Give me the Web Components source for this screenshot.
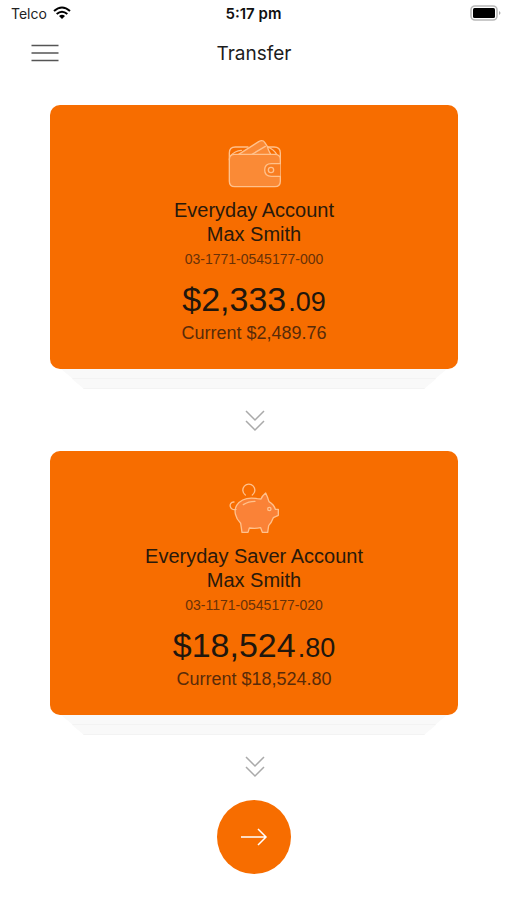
<!DOCTYPE html>
<html lang="en">
<head>
<meta charset="utf-8">
<meta name="viewport" content="width=device-width, initial-scale=1">
<title>Transfer</title>
<style>
body { margin: 0; background: #fff; color: #1c1c1c; font-family: "Liberation Sans", Arial, sans-serif; }
</style>
</head>
<body>
<transfer-screen></transfer-screen>

<template id="status-bar">
<style>
:host { display: grid; grid-template-columns: 1fr auto 1fr; align-items: center; height: 28px; padding: 0 5px; font: 14px/20px Inter, Roboto, sans-serif; color: #222; }
.left { display: flex; align-items: center; gap: 6px; padding-left: 6px; }
.left svg { margin-bottom: 2px; }
.time { font-weight: 600; font-size: 15px; color: #111; }
.right { display: flex; justify-content: flex-end; padding-bottom: 2px; }
svg { display: block; }
</style>
<div class="left"><span>Telco</span>
<svg width="18" height="14" viewBox="0 0 54 42" fill="none" stroke="#000" stroke-width="6" aria-label="Wi-Fi"><path d="M3 15Q27 -6 51 15M11 24Q27 10 43 24"/><path d="M18 30Q27 23 36 30L27 39Z" fill="#000" stroke="none"/></svg></div>
<span class="time">5:17 pm</span>
<div class="right"><svg width="32" height="16" viewBox="0 0 32 16" aria-label="Battery"><rect x="1" y="1" width="26" height="14" rx="4" fill="#fff" stroke="#b8b8b8" stroke-width="1.6"/><rect x="3" y="3" width="22" height="10" rx="1.5" fill="#000"/><path d="M29 6Q32 8 29 10Z" fill="#aaa"/></svg></div>
</template>

<template id="nav-bar">
<style>
:host { display: grid; grid-template-columns: 1fr auto 1fr; align-items: center; height: 50px; padding: 0 24px 0 25px; }
button { justify-self: start; padding: 6px; border: 0; background: none; cursor: pointer; }
svg { display: block; }
h1 { margin: 0; padding-top: 1px; font: 400 19px/24px Inter, Roboto, sans-serif; color: #1c1c1c; }
</style>
<button type="button" aria-label="Menu"><svg width="28" height="18" viewBox="0 0 28 18" stroke="#555" stroke-width="1.6"><path d="M.5 1.5H27.5M.5 9H27.5M.5 16.5H27.5"/></svg></button>
<h1><slot></slot></h1>
</template>

<template id="account-card">
<style>
:host { display: block; text-align: center; }
article { display: flex; flex-direction: column; align-items: center; padding: 32px 16px 24px; border-radius: 10px; background: #f76d00; }
h2 { margin: 5px 0 0; font-weight: 400; font-size: 20px; line-height: 24px; color: #29190b; }
.owner, .number, .amount, .current { margin: 0; }
.owner { font-size: 20px; line-height: 24px; color: #29190b; }
.number { margin-top: 3px; font-size: 14px; line-height: 20px; color: #693108; }
.amount { display: flex; align-items: baseline; gap: 2px; margin-top: 10px; font-size: 34px; line-height: 40px; color: #20160d; }
.cents { font-size: 27px; line-height: 32px; }
.current { margin-top: 2px; font-size: 18px; line-height: 24px; color: #592b09; }
.sheet { box-sizing: border-box; height: 10px; margin: 0 11px; background: #f9f9f9; border-bottom: 1px solid #f3f3f3; clip-path: polygon(0 0, 100% 0, calc(100% - 12px) 100%, 12px 100%); }
.sheet + .sheet { margin: 0 22px; }
</style>
<article>
<slot name="icon"></slot>
<h2><slot name="name"></slot></h2>
<p class="owner"><slot name="owner"></slot></p>
<p class="number"><slot name="number"></slot></p>
<p class="amount"><span><slot name="whole"></slot></span><span class="cents"><slot name="cents"></slot></span></p>
<p class="current"><slot name="current"></slot></p>
</article>
<div class="sheet"></div><div class="sheet"></div>
</template>

<template id="wallet-icon">
<style>:host, svg { display: block; }</style>
<svg width="56" height="56" viewBox="48 22 168 168" fill="none" stroke="#ffc18c" stroke-width="4" stroke-linejoin="round" stroke-linecap="round" aria-hidden="true">
<path d="M58 90V70Q58 52 76 52H114M174 52H192Q211 52 211 70V90"/>
<path d="M86 74L146 36Q158 29 164 38L172 50Q174 60 182 74" fill="#fa8a36"/>
<path d="M126 74L166 50M62 78Q74 64 94 62M174 52Q192 60 200 74"/>
<path d="M58 90Q58 74 74 74H195Q211 74 211 90V155Q211 171 195 171H74Q58 171 58 155Z" fill="#fa8a36"/>
<path d="M211 102H184Q164 102 164 121T184 140H211" fill="#f97e22"/><circle cx="183" cy="121" r="8"/>
</svg>
</template>

<template id="piggy-icon">
<style>:host, svg { display: block; }</style>
<svg width="56" height="56" viewBox="48 24 168 168" fill="none" stroke="#ffc18c" stroke-width="4" stroke-linejoin="round" stroke-linecap="round" aria-hidden="true">
<path d="M142 71C115 66 92 73 80 91C71 106 75 128 92 145L96 172H114L118 159C130 161 140 161 152 158L157 172H173L176 152Q184 143 190 128L205 121V103H196Q192 89 177 80Q173 66 167 54Q156 63 153 72Z" fill="#fa8237"/>
<path d="M106 60A18 18 0 1 1 127 60M78 103C58 109 54 80 72 81M100 89Q115 79 135 79"/>
<circle cx="178" cy="102" r="5"/>
</svg>
</template>

<template id="flow-arrow">
<style>:host { display: flex; justify-content: center; padding: 20px 0 18px 2px; } svg { display: block; }</style>
<svg width="20" height="24" viewBox="0 0 20 24" fill="none" stroke="#aaa" stroke-width="1.5" aria-hidden="true"><path d="M1 2L10 11L19 2M1 12L10 21L19 12"/></svg>
</template>

<template id="round-action">
<style>
:host { display: flex; justify-content: center; }
button { display: grid; place-items: center; width: 74px; height: 74px; padding: 0; border: 0; border-radius: 50%; background: #f76d00; cursor: pointer; }
</style>
<button type="button" aria-label="Continue"><svg width="28" height="18" viewBox="0 0 28 18" fill="none" stroke="#fff" stroke-width="1.5"><path d="M1 9H26M18 1L26 9L18 17"/></svg></button>
</template>

<template id="transfer-screen">
<style>
:host { display: block; }
main { padding: 27px 49px 26px 50px; }
round-action { margin-top: 3px; }
</style>
<status-bar></status-bar>
<nav-bar>Transfer</nav-bar>
<main>
<account-card>
<wallet-icon slot="icon"></wallet-icon>
<span slot="name">Everyday Account</span><span slot="owner">Max Smith</span><span slot="number">03-1771-0545177-000</span><span slot="whole">$2,333</span><span slot="cents">.09</span><span slot="current">Current $2,489.76</span>
</account-card>
<flow-arrow></flow-arrow>
<account-card>
<piggy-icon slot="icon"></piggy-icon>
<span slot="name">Everyday Saver Account</span><span slot="owner">Max Smith</span><span slot="number">03-1171-0545177-020</span><span slot="whole">$18,524</span><span slot="cents">.80</span><span slot="current">Current $18,524.80</span>
</account-card>
<flow-arrow></flow-arrow>
<round-action></round-action>
</main>
</template>

<script>
class TemplateElement extends HTMLElement {
  constructor() {
    super();
    const template = document.getElementById(this.localName);
    this.attachShadow({ mode: "open" }).append(template.content.cloneNode(true));
  }
}
for (const name of ["status-bar", "nav-bar", "account-card", "wallet-icon", "piggy-icon", "flow-arrow", "round-action", "transfer-screen"]) {
  customElements.define(name, class extends TemplateElement {});
}
</script>
</body>
</html>
